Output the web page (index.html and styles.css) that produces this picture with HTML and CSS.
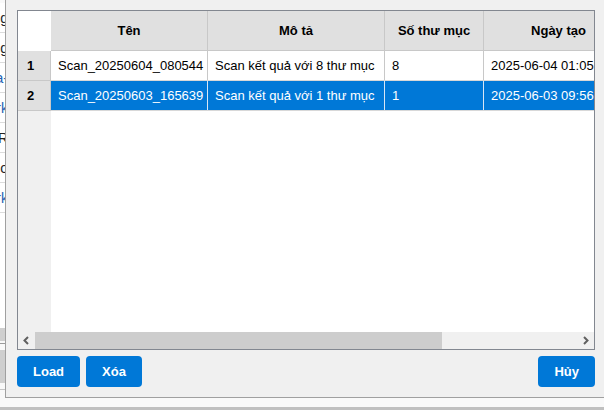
FILE: index.html
```html
<!DOCTYPE html>
<html lang="vi">
<head>
<meta charset="utf-8">
<title>Scan list</title>
<link rel="stylesheet" href="styles.css">
</head>
<body>
<div class="page">
  <div class="bg">
    <div class="bg-list">
      <div class="bg-row"><span class="bg-t">Setting</span></div>
      <div class="bg-row"><span class="bg-t">Setting</span></div>
      <div class="bg-row"><span class="bg-t blue">a-</span></div>
      <div class="bg-row"><span class="bg-t blue">Work</span></div>
      <div class="bg-row"><span class="bg-t">FR</span></div>
      <div class="bg-row"><span class="bg-t">Do</span></div>
      <div class="bg-row"><span class="bg-t blue">Work</span></div>
    </div>
    <div class="bg-gap"></div>
    <div class="bg-block b1"></div>
    <div class="bg-line l1"></div>
    <div class="bg-block b2"></div>
    <div class="bg-line l2"></div>
  </div>
  <div class="bg-bar"></div>

  <div class="dialog">
    <div class="grid">
      <div class="grid-body">
        <div class="rh-col">
          <div class="corner"></div>
          <div class="rh">1</div>
          <div class="rh">2</div>
        </div>
        <div class="data-col">
          <div class="hrow">
            <div class="hc c1">Tên</div>
            <div class="hc c2">Mô tả</div>
            <div class="hc c3">Số thư mục</div>
            <div class="hc c4">Ngày tạo</div>
          </div>
          <div class="row">
            <div class="cell c1">Scan_20250604_080544</div>
            <div class="cell c2">Scan kết quả với 8 thư mục</div>
            <div class="cell c3">8</div>
            <div class="cell c4">2025-06-04 01:05:44</div>
          </div>
          <div class="row sel">
            <div class="cell c1">Scan_20250603_165639</div>
            <div class="cell c2">Scan kết quả với 1 thư mục</div>
            <div class="cell c3">1</div>
            <div class="cell c4">2025-06-03 09:56:39</div>
          </div>
        </div>
      </div>
      <div class="hscroll">
        <div class="arrow">
          <svg width="17" height="17" viewBox="0 0 17 17"><polyline points="10,5 6.5,8.5 10,12" fill="none" stroke="#606060" stroke-width="2"/></svg>
        </div>
        <div class="track"><div class="thumb"></div></div>
        <div class="arrow">
          <svg width="17" height="17" viewBox="0 0 17 17"><polyline points="7,5 10.5,8.5 7,12" fill="none" stroke="#606060" stroke-width="2"/></svg>
        </div>
      </div>
    </div>
    <div class="buttons">
      <button class="btn">Load</button>
      <button class="btn">Xóa</button>
      <span class="spacer"></span>
      <button class="btn">Hủy</button>
    </div>
  </div>
</div>
</body>
</html>
```

FILE: styles.css
```css
html, body {
  margin: 0;
  padding: 0;
}
body {
  width: 604px;
  height: 410px;
  overflow: hidden;
  background: #f9f9f9;
  font-family: "Liberation Sans", Arial, sans-serif;
  font-size: 13px;
  color: #000;
}
.page {
  position: relative;
  width: 604px;
  height: 410px;
  overflow: hidden;
}

/* background application behind the dialog */
.bg {
  height: 407px;
  display: flex;
  flex-direction: column;
  width: 5px;
  overflow: hidden;
}
.bg-list {
  margin-top: 3px;
  background: #fff;
}
.bg-row {
  height: 29px;
  border-bottom: 1px solid #dcdcdc;
  display: flex;
  justify-content: flex-end;
  align-items: center;
  overflow: hidden;
}
.bg-t {
  white-space: nowrap;
  margin-right: -3px;
  font-size: 14px;
  color: #222;
}
.bg-t.blue { color: #1a5fb4; }
.bg-gap { height: 115px; background: #fff; }
.bg-block { background: #cfcfcf; }
.bg-block.b1 { height: 13px; }
.bg-line { height: 1px; background: #9a9a9a; }
.bg-line.l1 { margin-top: 2px; margin-bottom: 6px; }
.bg-block.b2 { height: 33px; }
.bg-line.l2 { margin-top: 6px; background: #c4c4c4; }
.bg-bar {
  height: 3px;
  background: #c0c0c0;
}

/* dialog window */
.dialog {
  position: absolute;
  left: 5px;
  top: 0;
  width: 578px;
  height: 377px;
  padding: 10px 11px;
  background: #f0f0f0;
  border-left: 1px solid #a0a0a0;
  border-bottom: 1px solid #a0a0a0;
  display: flex;
  flex-direction: column;
  gap: 6px;
}

.grid {
  height: 338px;
  border: 1px solid #828790;
  display: flex;
  flex-direction: column;
  background: #fff;
}
.grid-body {
  flex: 1;
  display: flex;
  overflow: hidden;
}
.rh-col {
  width: 33px;
  flex: none;
  background: #f0f0f0;
  display: flex;
  flex-direction: column;
}
.corner {
  height: 40px;
  background: #fff;
}
.rh {
  box-sizing: border-box;
  height: 30px;
  background: #e0e0e0;
  border-bottom: 1px solid #c8c8c8;
  border-right: 1px solid #c8c8c8;
  padding-left: 9px;
  display: flex;
  align-items: center;
  font-weight: bold;
}
.data-col {
  flex: 1;
  overflow: hidden;
  background: #fff;
}
.hrow, .row {
  display: flex;
  box-sizing: border-box;
  white-space: nowrap;
}
.hrow {
  height: 40px;
  background: #e0e0e0;
  border-bottom: 1px solid #c8c8c8;
}
.row {
  height: 30px;
  border-bottom: 1px solid #d8d8d8;
}
.row.sel {
  background: #0078d7;
  color: #fff;
}
.hc, .cell {
  box-sizing: border-box;
  flex: none;
  border-right: 1px solid #c8c8c8;
  display: flex;
  align-items: center;
  overflow: hidden;
}
.hc {
  justify-content: center;
  font-weight: bold;
}
.cell {
  padding-left: 7px;
}
.row.sel .cell { border-right-color: #d8e6f5; }
.c1 { width: 157px; }
.c2 { width: 177px; }
.c3 { width: 99px; }
.c4 { width: 150px; }

.hscroll {
  height: 17px;
  flex: none;
  display: flex;
  background: #f0f0f0;
}
.arrow {
  width: 17px;
  height: 17px;
  flex: none;
}
.arrow svg { display: block; }
.track {
  flex: 1;
  display: flex;
}
.thumb {
  width: 407px;
  background: #cdcdcd;
}

.buttons {
  display: flex;
  gap: 6px;
  height: 31px;
}
.spacer { flex: 1; }
.btn {
  height: 31px;
  padding: 0 16px;
  border: none;
  border-radius: 4px;
  background: #0078d7;
  color: #fff;
  font-family: "Liberation Sans", Arial, sans-serif;
  font-size: 13px;
  font-weight: bold;
}
```
